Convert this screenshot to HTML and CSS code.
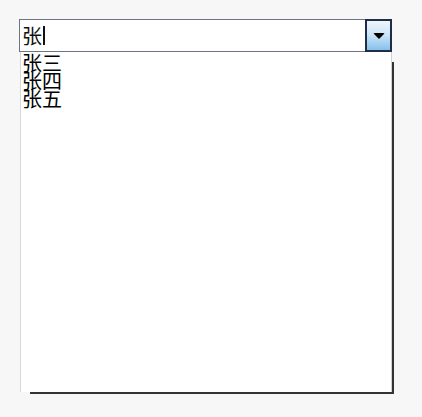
FILE: index.html
```html
<!DOCTYPE html>
<html lang="zh">
<head>
    <meta charset="UTF-8">
    <title>Combo</title>
    <link rel="stylesheet" href="styles.css">
</head>
<body>
    <div class="combo">
        <div class="field">
            <div class="input">张<span class="caret"></span></div>
            <div class="arrow"><span class="tri"></span></div>
        </div>
        <ul class="list">
            <li>张三</li>
            <li>张四</li>
            <li>张五</li>
        </ul>
    </div>
</body>
</html>
```

FILE: styles.css
```css
* {
    box-sizing: border-box;
}
body {
    margin: 0;
    background-color: #f7f7f7;
    font-family: "Noto Sans CJK SC", "Noto Sans", sans-serif;
}
.combo {
    width: 392px;
    padding: 19px 0 20px 19px;
}
.field {
    display: flex;
    height: 33px;
}
.input {
    flex: 1;
    display: flex;
    align-items: center;
    background-color: #fff;
    border: 1px solid #6f7580;
    border-right: none;
    padding-left: 2px;
    font-size: 20px;
    color: #111;
}
.caret {
    width: 2px;
    height: 19px;
    margin-left: 1px;
    background-color: #111;
}
.arrow {
    width: 27px;
    display: flex;
    align-items: center;
    justify-content: center;
    border: 2px solid #1e2d48;
    background: linear-gradient(#eef6fc, #cfe6f8 45%, #86c0ec);
}
.tri {
    width: 0;
    height: 0;
    border-left: 6px solid transparent;
    border-right: 6px solid transparent;
    border-top: 6px solid #000;
    border-radius: 2px;
}
.list {
    list-style: none;
    margin: 0 0 0 1px;
    padding: 2px 0 0 1px;
    height: 340px;
    background-color: #fff;
    border-left: 1px solid #d8d8d8;
    border-right: 1px solid #d0d0d0;
    box-shadow: 6px 6px 0 -4px #333;
    font-size: 20px;
    line-height: 18px;
    color: #000;
}
```
